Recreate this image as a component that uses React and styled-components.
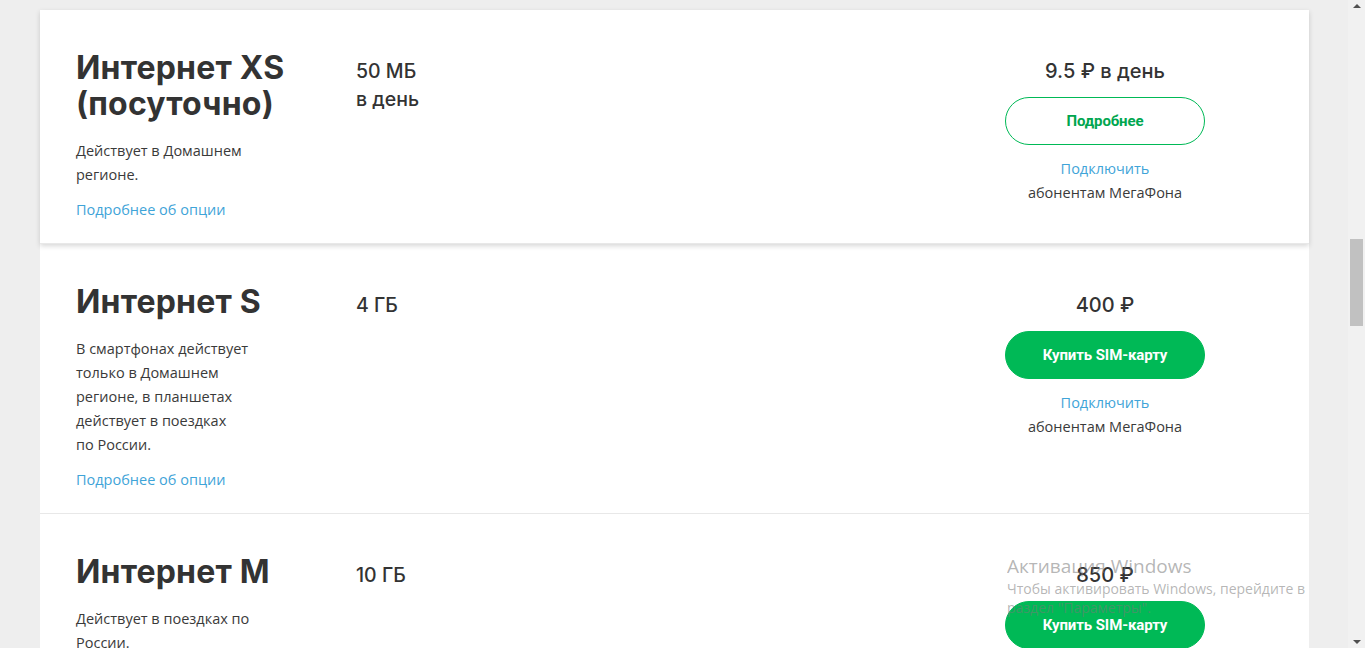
import React from 'react';
import styled, { createGlobalStyle } from 'styled-components';

const GlobalStyle = createGlobalStyle`
  html, body {
    margin: 0;
    padding: 0;
    height: 100%;
    overflow: hidden;
    background: #eeeeee;
  }
  body {
    font-family: 'Open Sans', 'Liberation Sans', Arial, sans-serif;
    color: #333333;
  }
`;

const Page = styled.div`
  display: flex;
  height: 648px;
  width: 1365px;
  position: relative;
  overflow: hidden;
`;

const Main = styled.main`
  flex: 1;
  padding: 10px 39px 0 40px;
  overflow: hidden;
`;

const List = styled.div`
  display: flex;
  flex-direction: column;
`;

const Card = styled.section`
  display: flex;
  align-items: flex-start;
  background: #ffffff;
  padding: 40px 104px 21px 36px;
  border-bottom: 1px solid #e8e8e8;
  box-shadow: ${(p) => (p.$raised ? '0 2px 5px rgba(0, 0, 0, 0.16)' : 'none')};
  position: relative;
  z-index: ${(p) => (p.$raised ? 1 : 0)};
`;

const InfoCol = styled.div`
  width: 280px;
  flex-shrink: 0;
`;

const Title = styled.h2`
  margin: 0;
  font-family: 'Inter', 'Noto Sans', sans-serif;
  font-weight: 700;
  font-size: 32px;
  line-height: 36px;
  letter-spacing: 0.2px;
  color: #333333;
`;

const Desc = styled.p`
  margin: 17px 0 0;
  font-size: 14.5px;
  line-height: 24px;
  color: #3a3a3a;
`;

const Link = styled.a`
  display: block;
  margin-top: 11px;
  font-size: 14.5px;
  line-height: 24px;
  color: #3fa4d8;
  text-decoration: none;
  cursor: pointer;
`;

const VolumeCol = styled.div`
  flex: 1;
  padding-top: 7px;
`;

const Volume = styled.div`
  font-family: 'Inter', 'Noto Sans', sans-serif;
  font-weight: 500;
  font-size: 19.5px;
  line-height: 28px;
  color: #333333;
`;

const PriceCol = styled.div`
  width: 200px;
  flex-shrink: 0;
  display: flex;
  flex-direction: column;
  align-items: center;
  padding-top: 7px;
`;

const Price = styled.div`
  font-family: 'Inter', 'Noto Sans', sans-serif;
  font-weight: 500;
  font-size: 20px;
  line-height: 28px;
  color: #333333;
`;

const Button = styled.button`
  margin-top: 12px;
  width: 200px;
  height: 48px;
  border-radius: 24px;
  font-family: 'Roboto', 'Liberation Sans', sans-serif;
  font-weight: 700;
  font-size: 15px;
  letter-spacing: -0.1px;
  cursor: pointer;
  border: 1px solid #00b956;
  background: ${(p) => (p.$outline ? '#ffffff' : '#00b956')};
  color: ${(p) => (p.$outline ? '#00a64f' : '#ffffff')};
`;

const Connect = styled.div`
  margin-top: 12px;
  text-align: center;
  font-size: 14.5px;
  line-height: 24px;
  color: #3a3a3a;
`;

const ConnectLink = styled.a`
  display: block;
  color: #3fa4d8;
  text-decoration: none;
`;

const Scrollbar = styled.div`
  width: 17px;
  flex-shrink: 0;
  background: #f1f1f1;
  position: relative;
  display: flex;
  flex-direction: column;
  justify-content: space-between;
  align-items: center;
  padding: 4px 0;
  box-sizing: border-box;
`;

const Arrow = styled.span`
  width: 0;
  height: 0;
  border-left: 4px solid transparent;
  border-right: 4px solid transparent;
  ${(p) => (p.$down ? 'border-top: 4px solid #505050;' : 'border-bottom: 4px solid #505050;')}
`;

const Thumb = styled.div`
  position: absolute;
  left: 2px;
  top: 239px;
  width: 13px;
  height: 87px;
  background: #c1c1c1;
`;

const Watermark = styled.div`
  position: absolute;
  left: 1007px;
  top: 553px;
  width: 302px;
  overflow: hidden;
  white-space: nowrap;
  font-family: 'Open Sans', 'Noto Sans', sans-serif;
  color: rgba(120, 120, 120, 0.55);
  pointer-events: none;
  z-index: 5;
`;

const WmTitle = styled.div`
  font-size: 19px;
  line-height: 26px;
`;

const WmText = styled.div`
  font-size: 14px;
  line-height: 19px;
`;

const plans = [
  {
    title: ['Интернет XS', '(посуточно)'],
    desc: ['Действует в Домашнем', 'регионе.'],
    volume: ['50 МБ', 'в день'],
    price: '9.5 ₽ в день',
    button: 'Подробнее',
    outline: true,
    raised: true,
  },
  {
    title: ['Интернет S'],
    desc: [
      'В смартфонах действует',
      'только в Домашнем',
      'регионе, в планшетах',
      'действует в поездках',
      'по России.',
    ],
    volume: ['4 ГБ'],
    price: '400 ₽',
    button: 'Купить SIM-карту',
  },
  {
    title: ['Интернет M'],
    desc: ['Действует в поездках по', 'России.'],
    volume: ['10 ГБ'],
    price: '850 ₽',
    button: 'Купить SIM-карту',
  },
];

const lines = (arr) =>
  arr.map((l, i) => (
    <React.Fragment key={i}>
      {i > 0 && <br />}
      {l}
    </React.Fragment>
  ));

const PlanCard = ({ plan }) => (
  <Card $raised={plan.raised}>
    <InfoCol>
      <Title>{lines(plan.title)}</Title>
      <Desc>{lines(plan.desc)}</Desc>
      <Link>Подробнее об опции</Link>
    </InfoCol>
    <VolumeCol>
      {plan.volume.map((v) => (
        <Volume key={v}>{v}</Volume>
      ))}
    </VolumeCol>
    <PriceCol>
      <Price>{plan.price}</Price>
      <Button $outline={plan.outline}>{plan.button}</Button>
      <Connect>
        <ConnectLink>Подключить</ConnectLink>
        абонентам МегаФона
      </Connect>
    </PriceCol>
  </Card>
);

const App = () => (
  <Page>
    <GlobalStyle />
    <Main>
      <List>
        {plans.map((p) => (
          <PlanCard key={p.title[0]} plan={p} />
        ))}
      </List>
    </Main>
    <Scrollbar>
      <Arrow />
      <Thumb />
      <Arrow $down />
    </Scrollbar>
    <Watermark>
      <WmTitle>Активация Windows</WmTitle>
      <WmText>Чтобы активировать Windows, перейдите в</WmText>
      <WmText>раздел "Параметры".</WmText>
    </Watermark>
  </Page>
);

export default App;
